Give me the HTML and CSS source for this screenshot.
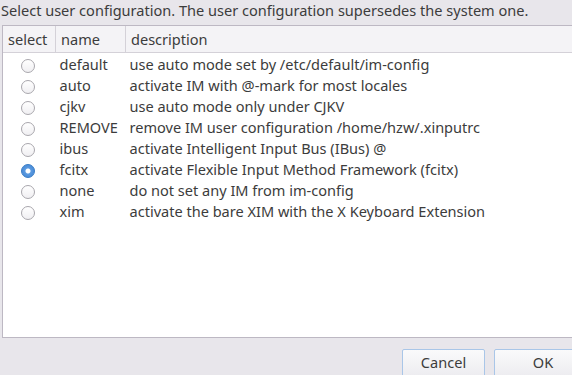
FILE: index.html
```html
<!DOCTYPE html>
<html lang="en">
<head>
  <meta charset="UTF-8" />
  <title>im-config</title>
  <link rel="stylesheet" href="styles.css">
</head>
<body>
  <div class="dialog">
    <p class="prompt">Select user configuration. The user configuration supersedes the system one.</p>

    <div class="list-box">
      <table class="list">
        <thead>
          <tr>
            <th class="col-select">select</th>
            <th class="col-name">name</th>
            <th class="col-desc">description</th>
          </tr>
        </thead>
        <tbody>
          <tr><td class="col-select"><span class="radio"></span></td><td>default</td><td>use auto mode set by /etc/default/im-config</td></tr>
          <tr><td class="col-select"><span class="radio"></span></td><td>auto</td><td>activate IM with @-mark for most locales</td></tr>
          <tr><td class="col-select"><span class="radio"></span></td><td>cjkv</td><td>use auto mode only under CJKV</td></tr>
          <tr><td class="col-select"><span class="radio"></span></td><td>REMOVE</td><td>remove IM user configuration /home/hzw/.xinputrc</td></tr>
          <tr><td class="col-select"><span class="radio"></span></td><td>ibus</td><td>activate Intelligent Input Bus (IBus) @</td></tr>
          <tr><td class="col-select"><span class="radio checked"></span></td><td>fcitx</td><td>activate Flexible Input Method Framework (fcitx)</td></tr>
          <tr><td class="col-select"><span class="radio"></span></td><td>none</td><td>do not set any IM from im-config</td></tr>
          <tr><td class="col-select"><span class="radio"></span></td><td>xim</td><td>activate the bare XIM with the X Keyboard Extension</td></tr>
        </tbody>
      </table>
    </div>

    <div class="buttons">
      <button class="btn btn-cancel">Cancel</button>
      <button class="btn btn-ok">OK</button>
    </div>
  </div>
</body>
</html>
```

FILE: styles.css
```css
body {
  margin: 0;
  padding: 0;
  background: #e8e6eb;
  font-family: 'Noto Sans', 'DejaVu Sans', sans-serif;
  font-size: 14.55px;
  color: #3c3c3c;
  overflow: hidden;
}

.dialog {
  width: 572px;
  height: 375px;
  overflow: hidden;
}

.prompt {
  margin: 0;
  padding: 0 0 0 1px;
  height: 25px;
  line-height: 21px;
  white-space: nowrap;
}

.list-box {
  margin-left: 2px;
  width: 580px;
  height: 311px;
  background: #fff;
  border: 1px solid #bdb8c3;
  border-right: none;
}

.list {
  border-collapse: collapse;
  width: 100%;
}

.list th {
  height: 26px;
  padding: 0 0 0 5px;
  text-align: left;
  font-weight: normal;
  background: #f4f3f6;
  border-bottom: 1px solid #d4d1d8;
  border-right: 1px solid #d4d1d8;
}

.list td {
  height: 21px;
  padding: 0 0 0 4px;
  white-space: nowrap;
}

.list .col-select {
  width: 47px;
  padding-left: 5px;
}

.list .col-name {
  width: 64px;
}

.list .col-desc {
  border-right: none;
}

.list td.col-select {
  text-align: center;
  padding-left: 0;
}

.radio {
  display: inline-block;
  width: 12px;
  height: 12px;
  margin-right: 2px;
  border-radius: 50%;
  border: 1px solid #a9a7ad;
  background: linear-gradient(#ffffff, #f0eff2);
  vertical-align: middle;
}

.radio.checked {
  border-color: #3d7fc6;
  background: radial-gradient(circle, #ffffff 0 2px, #5b9ae0 3px, #3e83d4 100%);
}

.buttons {
  display: flex;
  justify-content: flex-end;
  gap: 9px;
  margin-top: 11px;
  margin-right: -20px;
}

.btn {
  height: 30px;
  font-family: inherit;
  font-size: 14.55px;
  color: #3c3c3c;
  background: linear-gradient(#fafafb, #ecebef);
  border: 1px solid #a9c6e8;
  border-radius: 2px;
  padding: 0 0 4px;
}

.btn-cancel {
  width: 83px;
}

.btn-ok {
  width: 98px;
}
```
